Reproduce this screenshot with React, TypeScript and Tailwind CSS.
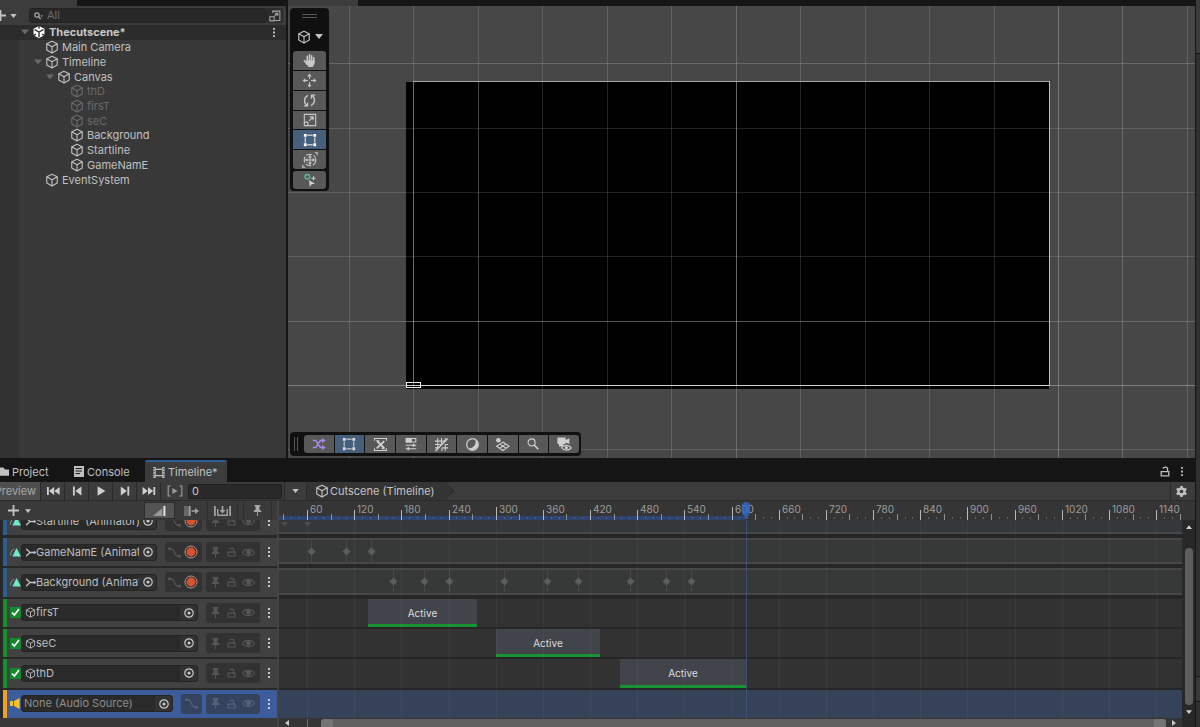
import React from "react";

type P = { className?: string };

const Svg = ({ className = "", vb = "0 0 16 16", children }: P & { vb?: string; children: React.ReactNode }) => (
  <svg viewBox={vb} className={"shrink-0 " + className} fill="none" stroke="currentColor" aria-hidden="true">
    {children}
  </svg>
);

const Cube = ({ className = "size-[14px]" }: P) => (
  <Svg className={className}>
    <path d="M8 1.4 14 4.4V11.4L8 14.8 2 11.4V4.4Z M2 4.4 8 7.6 14 4.4 M8 7.6V14.8" strokeWidth="1.3" strokeLinejoin="round" />
  </Svg>
);
const UnityLogo = ({ className = "size-[14px]" }: P) => (
  <Svg className={className}>
    <path d="M8 1 14.2 4.4V11.6L8 15 1.8 11.6V4.4Z" fill="currentColor" stroke="none" />
    <path d="M8 8V14M8 8 3 5.2M8 8 13 5.2" stroke="#2c2c2c" strokeWidth="1.6" />
    <path d="M8 0V4M1 12.4 4.4 10.4M15 12.4 11.6 10.4" stroke="#2c2c2c" strokeWidth="1.6" />
  </Svg>
);
const Caret = ({ className = "w-[8px] h-[5px]" }: P) => (
  <Svg className={className} vb="0 0 8 5"><path d="M0 0H8L4 5Z" fill="currentColor" stroke="none" /></Svg>
);
const Dots = ({ className = "w-[4px] h-[12px]" }: P) => (
  <Svg className={className} vb="0 0 4 12">
    <path d="M1 1H3V3H1ZM1 5H3V7H1ZM1 9H3V11H1Z" fill="currentColor" stroke="none" />
  </Svg>
);
const Plus = ({ className = "size-[11px]" }: P) => (
  <Svg className={className} vb="0 0 11 11"><path d="M5.5 0V11M0 5.5H11" strokeWidth="1.8" /></Svg>
);
const Lock = ({ className = "w-[10px] h-[11px]" }: P) => (
  <Svg className={className} vb="0 0 10 11">
    <path d="M1.2 5.6H8.8V9.9H1.2ZM3 2.6C3.4 .8 7.6 .4 7.6 3.2V5.6" strokeWidth="1.3" />
  </Svg>
);
const Pin = ({ className = "w-[9px] h-[12px]" }: P) => (
  <Svg className={className} vb="0 0 9 12">
    <path d="M1.4 0H7.6V1.6H6.6V5L8.6 6.2V7.6H.4V6.2L2.4 5V1.6H1.4ZM4 7.6H5V12H4Z" fill="currentColor" stroke="none" />
  </Svg>
);
const Eye = ({ className = "w-[13px] h-[9px]" }: P) => (
  <Svg className={className} vb="0 0 13 9">
    <path d="M.6 4.5C3 .3 10 .3 12.4 4.5 10 8.7 3 8.7 .6 4.5Z" strokeWidth="1.1" />
    <circle cx="6.5" cy="4.3" r="2.5" fill="currentColor" stroke="none" />
  </Svg>
);
const Picker = ({ className = "size-[10px]" }: P) => (
  <Svg className={className} vb="0 0 10 10">
    <circle cx="5" cy="5" r="4.2" strokeWidth="1.2" />
    <circle cx="5" cy="5" r="1.6" fill="currentColor" stroke="none" />
  </Svg>
);
const Curve = ({ className = "w-[14px] h-[12px]" }: P) => (
  <Svg className={className} vb="0 0 14 12">
    <path d="M2.5 2C9 2 5 10 11.5 10" strokeWidth="1.2" />
    <path d="M0 .6H3V3.4H0ZM11 8.6H14V11.4H11Z" fill="currentColor" stroke="none" />
  </Svg>
);
const RectTool = ({ className = "size-[14px]" }: P) => (
  <Svg className={className}>
    <path d="M5 2.5H11M5 13.5H11M2.5 5V11M13.5 5V11" strokeWidth="1.1" />
    <path d="M1 1H4.2V4.2H1ZM11.8 1H15V4.2H11.8ZM1 11.8H4.2V15H1ZM11.8 11.8H15V15H11.8Z" fill="currentColor" stroke="none" />
  </Svg>
);

/* ---------- Hierarchy ---------- */

type Node = { name: string; level: number; open?: boolean; kind?: "scene"; off?: boolean };
const nodes: Node[] = [
  { name: "Thecutscene*", level: 0, open: true, kind: "scene" },
  { name: "Main Camera", level: 1 },
  { name: "Timeline", level: 1, open: true },
  { name: "Canvas", level: 2, open: true },
  { name: "thD", level: 3, off: true },
  { name: "firsT", level: 3, off: true },
  { name: "seC", level: 3, off: true },
  { name: "Background", level: 3 },
  { name: "Startline", level: 3 },
  { name: "GameNamE", level: 3 },
  { name: "EventSystem", level: 1 },
];
const indent = ["pl-[21px]", "pl-[34px]", "pl-[46px]", "pl-[59px]"];

function Hierarchy() {
  return (
    <section className="flex w-[286px] shrink-0 flex-col bg-[#383838]">
      <div className="flex h-[6px] items-end overflow-hidden bg-[#151515]">
        <button className="flex h-[22px] w-[77px] shrink-0 items-center bg-[#3c3c3c] pb-[6px] pl-[10px] text-[11px] leading-[16px]">Hierarchy</button>
      </div>
      <div className="flex h-[19px] items-center bg-[#3c3c3c] pr-[3px]">
        <button aria-label="Create" className="flex w-[29px] items-center gap-[4px] overflow-hidden text-[#c4c4c4]">
          <Plus className="-ml-[5px] size-[11px]" />
          <Caret className="w-[7px] h-[4px]" />
        </button>
        <label className="flex h-[15px] flex-1 items-center gap-[4px] rounded-[3px] border border-[#232323] bg-[#282828] pl-[4px]">
          <Svg className="h-[8px] w-[9px] text-[#b0b0b0]" vb="0 0 9 8">
            <circle cx="3" cy="3" r="2.2" strokeWidth="1.2" />
            <path d="M4.6 4.6 6.6 7" strokeWidth="1.4" />
            <path d="M6.4 3.4H9L7.7 5Z" fill="currentColor" stroke="none" />
          </Svg>
          <input aria-label="Search" placeholder="All" className="w-full min-w-0 bg-transparent text-[11px] leading-[13px] text-[#c4c4c4] outline-none placeholder:text-[#6e6e6e]" />
        </label>
        <button aria-label="Open search window" className="flex h-[15px] w-[16px] items-center justify-center rounded-r-[3px] bg-[#2c2c2c] text-[#a8a8a8]">
          <Svg className="size-[12px]">
            <path d="M5 4V1.5H14.5V14H8M7.5 8 11.5 4.3M8 4.2H11.6V8" strokeWidth="1.4" />
            <path d="M1.2 9H7V14.5H1.2Z" strokeWidth="1.4" />
          </Svg>
        </button>
      </div>
      <ul role="tree" className="grid h-[162px] grid-rows-[repeat(11,1fr)] bg-[linear-gradient(90deg,#323232_19px,#383838_19px)]">
        {nodes.map((n) => (
          <li key={n.name} role="treeitem" className={"flex items-center text-[11px] leading-[14px] " + indent[n.level] + (n.kind ? " bg-[#2c2c2c] font-bold text-[#c8c8c8]" : n.off ? " text-[#6a6a6a]" : " text-[#c0c0c0]")}>
            <span className="flex w-[11px] text-[#686868]">{n.open && <Caret className="h-[6px] w-[8px]" />}</span>
            {n.kind ? <UnityLogo className="size-[14px] text-white" /> : <Cube />}
            <span className="ml-[3px]">{n.name}</span>
            {n.kind && (
              <button aria-label="Scene menu" className="ml-auto mr-[10px]"><Dots className="h-[11px] w-[4px]" /></button>
            )}
          </li>
        ))}
      </ul>
      <div className="flex-1 bg-[linear-gradient(90deg,#323232_19px,#383838_19px)]" />
    </section>
  );
}

/* ---------- Scene view ---------- */

const vLines = [61, 125, 190, 254, 319, 383, 448, 512, 577, 641, 706, 770, 834, 899];
const hLines = [57, 122, 186, 250, 315, 379, 443];

function SceneCanvas() {
  return (
    <svg className="absolute inset-0 h-full w-full" shapeRendering="crispEdges" aria-label="Scene view">
      <rect x="118" y="76" width="643" height="307" fill="#000" />
      {vLines.map((x, i) => (
        <rect key={x} x={x} y="0" width="1" height="100%" fill="#fff" opacity={i === 11 ? 0.26 : i === 12 || i === 6 ? 0.2 : 0.14} />
      ))}
      {hLines.map((y, i) => (
        <rect key={y} x="0" y={y} width="100%" height="1" fill="#fff" opacity={i === 5 ? 0.3 : i === 4 || i === 0 ? 0.18 : 0.13} />
      ))}
      <rect x="118" y="315" width="643" height="1" fill="#fff" opacity="0.2" />
      <rect x="448" y="76" width="1" height="303" fill="#fff" opacity="0.25" />
      <rect x="190" y="76" width="1" height="303" fill="#fff" opacity="0.16" />
      <rect x="125" y="76" width="1" height="303" fill="#8c8c8c" opacity="0.7" />
      <rect x="125" y="75" width="637" height="1" fill="#a8a8a8" />
      <rect x="761" y="75" width="1" height="305" fill="#c0c0c0" />
      <rect x="118" y="379" width="644" height="1" fill="#d0d0d0" />
      <rect x="118.5" y="376.5" width="14" height="5" fill="none" stroke="#f0f0f0" />
    </svg>
  );
}

const tools: { label: string; icon: React.ReactNode; on?: boolean }[] = [
  { label: "View", icon: (
    <Svg className="size-[15px]">
      <path d="M5.6 9V3.6M8 8V2M10.3 8.4V3M12.6 9.6V5.2M2.4 8 5.6 12" strokeWidth="1.7" strokeLinecap="round" />
      <path d="M4.8 8H13.4V11.4L11.4 15H7L4 10.6Z" fill="currentColor" stroke="none" />
    </Svg>) },
  { label: "Move", icon: (
    <Svg className="size-[15px]">
      <path d="M8 .6 10.4 3.6H5.6ZM8 15.4 10.4 12.4H5.6ZM.6 8 3.6 5.6V10.4ZM15.4 8 12.4 5.6V10.4Z" fill="currentColor" stroke="none" />
      <path d="M8 3V6.4M8 9.6V13M3 8H6.4M9.6 8H13" strokeWidth="1.1" />
    </Svg>) },
  { label: "Rotate", icon: (
    <Svg className="size-[15px]">
      <path d="M5.6 13.4C1.6 11 1.6 5 6.4 2.6M10.4 2.6C14.4 5 14.4 11 9.6 13.4" strokeWidth="1.4" />
      <path d="M2 13.8H6V10M14 2.2H10V6" strokeWidth="1.3" />
    </Svg>) },
  { label: "Scale", icon: (
    <Svg className="size-[14px]">
      <path d="M1.5 1.5H14.5V14.5H1.5ZM1.5 10.5H5.5V14.5M7 9 11.4 4.6M7.6 4.4H11.6V8.4" strokeWidth="1.3" />
    </Svg>) },
  { label: "Rect", icon: <RectTool />, on: true },
  { label: "Transform", icon: (
    <Svg className="size-[16px]">
      <circle cx="8" cy="8" r="5.8" strokeWidth="1.1" strokeDasharray="6 1.6" />
      <path d="M8 2.8 10 5.4H6ZM8 13.2 10 10.6H6ZM2.8 8 5.4 6V10ZM13.2 8 10.6 6V10Z" fill="currentColor" stroke="none" />
      <path d="M8 5V11M5 8H11M12.8 .8H15.2V3.2M3.2 15.2H.8V12.8" strokeWidth="1.1" />
    </Svg>) },
];

const views: { label: string; icon: React.ReactNode; on?: boolean }[] = [
  { label: "Shuffle", icon: (
    <Svg className="size-[14px] text-[#a78be0]">
      <path d="M1 4H4.4L9.6 12H13M1 12H4.4L9.6 4H13" strokeWidth="1.7" />
      <path d="M11.4 1 15.6 4 11.4 7ZM11.4 9 15.6 12 11.4 15Z" fill="currentColor" stroke="none" />
    </Svg>) },
  { label: "Rect handles", icon: <RectTool />, on: true },
  { label: "Tools", icon: (
    <Svg className="size-[15px]">
      <path d="M1.6 4V1.6H14.4V4M1.6 12V14.4H14.4V12" strokeWidth="1.2" />
      <path d="M4 12.2 12 4.4M4.4 4.4 12 12" strokeWidth="2" />
      <path d="M3 3.4H7L6 7ZM10 9.6 13 13H9Z" fill="currentColor" stroke="none" />
    </Svg>) },
  { label: "Draw mode", icon: (
    <Svg className="size-[14px]">
      <path d="M2.5 1.6H13.5V5.8H2.5Z" strokeWidth="1.2" />
      <path d="M2.5 1.6H8.4V5.8H2.5Z" fill="currentColor" />
      <path d="M2 9.4H14M2 13.4H14" strokeWidth="1.2" />
      <path d="M10 7.6H12V11H10ZM4 11.8H6V15.2H4Z" fill="currentColor" stroke="none" />
    </Svg>) },
  { label: "Grid", icon: (
    <Svg className="size-[15px]">
      <path d="M1 4.4H12M1 8H8M1 11.6H5M4 1V12M8 1V8M12 1V5M12 8V15M15 11.6H8.6M15 8H11.6M8.4 12V15" strokeWidth="1.1" />
      <path d="M1.6 15 14.6 1.6" strokeWidth="1.5" />
    </Svg>) },
  { label: "Lighting", icon: (
    <Svg className="size-[15px]">
      <circle cx="8" cy="8" r="6.2" strokeWidth="1.3" />
      <path d="M11 3C12.4 8 9.4 12 3.6 12.4 8 16 14.6 12.4 14 7 13.8 5 12.4 3.6 11 3Z" fill="currentColor" stroke="none" />
    </Svg>) },
  { label: "Layers", icon: (
    <Svg className="size-[15px]">
      <circle cx="3.6" cy="3.4" r="2.4" fill="currentColor" stroke="none" />
      <path d="M8.4 5.4 15 9.8 8.4 14.4 1.8 9.8ZM5.2 7.6 11.8 12M11.6 7.6 5 12" strokeWidth="1.2" />
    </Svg>) },
  { label: "Search", icon: (
    <Svg className="size-[14px]">
      <circle cx="6.4" cy="6.2" r="4" strokeWidth="1.3" />
      <path d="M9.4 9.2 14 14" strokeWidth="1.8" />
    </Svg>) },
  { label: "Camera", icon: (
    <Svg className="size-[16px]">
      <path d="M1.4 1.6H9.6V4L13.4 2.2V8L9.6 6.6V8H1.4ZM3 8H7.4V10.4H3Z" fill="currentColor" stroke="none" />
      <path d="M5.6 11.8C7.6 8.6 13 8.6 15.2 11.8 13 15 7.6 15 5.6 11.8Z" strokeWidth="1.2" fill="#585858" />
      <circle cx="10.4" cy="11.8" r="1.5" fill="currentColor" stroke="none" />
    </Svg>) },
];

const toolBtn = "flex min-h-0 items-center justify-center ";

function SceneView() {
  return (
    <section className="flex min-w-0 flex-1 flex-col">
      <div className="flex h-[6px] bg-[#151515]"><div className="w-[70px] bg-[#3c3c3c]" /></div>
      <div className="relative flex flex-1 flex-col items-start justify-between overflow-hidden bg-[#474747] p-[2px]">
        <SceneCanvas />
        <div role="toolbar" aria-label="Tools" className="relative flex w-[39px] flex-col rounded-[4px] bg-[#101010] px-[3px] pb-[2px] text-[#c4c4c4]">
          <div className="mx-auto mt-[6px] h-[4px] w-[15px] border-y border-[#555]" />
          <button aria-label="Pivot mode" className="flex h-[33px] items-center justify-center gap-[4px] pt-[4px]">
            <Cube className="size-[14px]" />
            <Caret className="h-[5px] w-[8px]" />
          </button>
          <div className="grid h-[118px] grid-rows-6 gap-px overflow-hidden rounded-[3px]">
            {tools.map((t) => (
              <button key={t.label} aria-label={t.label} className={toolBtn + (t.on ? "bg-[#46607c] text-white" : "bg-[#585858] text-[#c8c8c8]")}>{t.icon}</button>
            ))}
          </div>
          <button aria-label="Custom tools" className="mt-[2px] flex h-[18px] items-center justify-center rounded-[3px] bg-[#585858] text-[#d0d0d0]">
            <Svg className="size-[14px]">
              <circle cx="5" cy="4.4" r="2.7" stroke="#58c08c" strokeWidth="1.5" />
              <path d="M12 3.6V8.4M9.6 6H14.4" strokeWidth="1.2" />
              <path d="M7 8 13.6 12.4 9.8 12.8 7.6 16Z" fill="currentColor" stroke="none" />
            </Svg>
          </button>
        </div>
        <div role="toolbar" aria-label="View options" className="relative flex h-[24px] items-center rounded-[4px] bg-[#101010] pr-[2px]">
          <div className="ml-[4px] mr-[6px] h-[14px] w-[4px] border-x border-[#555]" />
          <div className="grid h-[18px] w-[275px] grid-cols-9 gap-px overflow-hidden rounded-[3px]">
            {views.map((t) => (
              <button key={t.label} aria-label={t.label} className={toolBtn + (t.on ? "bg-[#46607c] text-[#dcdcdc]" : "bg-[#585858] text-[#cfcfcf]")}>{t.icon}</button>
            ))}
          </div>
        </div>
      </div>
    </section>
  );
}

/* ---------- Timeline ---------- */

const transport: { label: string; d: string }[] = [
  { label: "First frame", d: "M1 2H2.8V10H1ZM8.2 2V10L3 6ZM13.6 2V10L8.4 6Z" },
  { label: "Previous frame", d: "M3 1.6H4.8V10.4H3ZM11.4 1.6V10.4L5.4 6Z" },
  { label: "Play", d: "M3.6 1.2V10.8L11.4 6Z" },
  { label: "Next frame", d: "M9.4 1.6H11.2V10.4H9.4ZM2.8 1.6V10.4L8.8 6Z" },
  { label: "Last frame", d: "M11.4 2H13.2V10H11.4ZM6 2V10L11.2 6ZM.6 2V10L5.8 6Z" },
];

const seg = "flex h-full items-center justify-center border-l border-[#2a2a2a] ";

function TabBar() {
  return (
    <div className="flex h-[23px] items-end bg-[#151515] text-[11px] leading-[16px] text-[#c0c0c0]">
      <button className="flex h-[22px] w-[74px] items-center gap-[3px] pt-px">
        <Svg className="h-[9px] w-[9px]" vb="0 0 9 9"><path d="M0 .6H3.4L5 2.4H9V8.8H0Z" fill="currentColor" stroke="none" /></Svg>
        Project
      </button>
      <button className="flex h-[22px] w-[71px] items-center gap-[3px] pt-px">
        <Svg className="h-[11px] w-[10px]" vb="0 0 10 11">
          <path d="M0 0H10V11H0Z" fill="currentColor" stroke="none" />
          <path d="M1.5 2.5H8M1.5 5H8M1.5 7.6H6" stroke="#151515" strokeWidth="1" />
        </Svg>
        Console
      </button>
      <button className="flex h-[22px] w-[82px] items-center gap-[3px] rounded-t-[2px] border-t-2 border-[#2f5f90] bg-[#3c3c3c] pl-[8px]">
        <Svg className="h-[11px] w-[12px]" vb="0 0 12 11">
          <path d="M1.6 0V11M10.4 0V11" strokeWidth="2.4" />
          <path d="M1.2 1V10M10.8 1V10" stroke="#3c3c3c" strokeWidth="1" strokeDasharray="1.4 1.4" />
          <path d="M3 2.4H9M3 8.6H9" strokeWidth="1.1" />
        </Svg>
        Timeline*
      </button>
      <div className="ml-auto flex h-[22px] items-center gap-[10px] pr-[11px]">
        <button aria-label="Lock"><Lock /></button>
        <button aria-label="Panel menu"><Dots className="h-[11px] w-[4px]" /></button>
      </div>
    </div>
  );
}

function TransportBar() {
  return (
    <div className="flex h-[19px] items-center border-b border-[#2a2a2a] bg-[#3c3c3c] text-[11px] leading-[16px] text-[#c4c4c4]">
      <button className="flex h-full w-[40px] items-center justify-end overflow-hidden bg-[#4e4e4e] pr-[4px] text-[#a8a8a8]">Preview</button>
      {transport.map((t) => (
        <button key={t.label} aria-label={t.label} className={seg + "w-[24px]"}>
          <Svg className="h-[12px] w-[14px] text-[#d0d0d0]" vb="0 0 14 12"><path d={t.d} fill="currentColor" stroke="none" /></Svg>
        </button>
      ))}
      <button aria-label="Play range" className={seg + "w-[28px] text-[#9a9a9a]"}>
        <Svg className="h-[12px] w-[16px]" vb="0 0 16 12">
          <path d="M3.6 1H1.2V11H3.6M12.4 1H14.8V11H12.4" strokeWidth="1.2" />
          <path d="M5.4 3V9L10.6 6Z" fill="currentColor" stroke="none" />
        </Svg>
      </button>
      <input aria-label="Current frame" defaultValue="0" className="h-[15px] w-[94px] rounded-[2px] border border-[#202020] bg-[#292929] pl-[3px] text-[11px] text-[#c8c8c8] outline-none" />
      <button aria-label="Select timeline" className={seg + "ml-[2px] w-[22px]"}><Caret className="h-[4px] w-[7px]" /></button>
      <nav className="flex h-full items-center border-l border-[#2a2a2a] bg-[#343434] pl-[8px]">
        <a href="#cutscene" className="flex items-center gap-[1px]"><Cube />Cutscene (Timeline)</a>
        <svg className="ml-[10px] h-[18px] w-[9px] bg-[#3c3c3c]" viewBox="0 0 9 18" aria-hidden="true">
          <path d="M0 0 9 9 0 18Z" fill="#343434" />
          <path d="M0 0 9 9 0 18" fill="none" stroke="#2a2a2a" />
        </svg>
      </nav>
      <button aria-label="Timeline settings" className={seg + "ml-auto mr-[3px] w-[22px]"}>
        <Svg className="size-[11px]" vb="0 0 12 12">
          <path d="M6 0V12M.8 3 11.2 9M.8 9 11.2 3" strokeWidth="2.6" />
          <circle cx="6" cy="6" r="3.4" strokeWidth="2.4" />
          <circle cx="6" cy="6" r="2" fill="#3c3c3c" stroke="none" />
        </Svg>
      </button>
    </div>
  );
}

const frameX = (f: number) => Math.floor(28.5 + (f - 60) * 0.7862);
const ticks = Array.from({ length: 115 }, (_, i) => 30 + i * 10).filter((f) => f <= 1170);

function Ruler() {
  return (
    <svg className="h-[19px] w-full flex-1 bg-[#353535]" shapeRendering="crispEdges" aria-label="Frames">
      <rect x="0" y="15" width="467" height="4" fill="#2f4470" />
      {ticks.map((f) => {
        const big = f % 300 === 0;
        const major = f % 60 === 0;
        const mid = f % 30 === 0;
        const h = big ? 13 : major ? 10 : mid ? 6 : 2;
        return (
          <rect key={f} x={frameX(f)} y={19 - h - (mid ? 0 : 1)} width="1" height={h} fill={major ? "#b8b8b8" : mid ? "#8e8e8e" : "#5c6270"} />
        );
      })}
      {ticks.filter((f) => f % 60 === 0).map((f) => (
        <text key={f} x={frameX(f) + 3} y="12" fontSize="10" fill="#9c9c9c">{f}</text>
      ))}
      <path d="M463 3Q467 -1 471 3V12L467 18 463 12Z" fill="#2f6ad0" opacity="0.8" shapeRendering="auto" />
    </svg>
  );
}

const mini = "flex h-[17px] items-center justify-center ";

function HeaderTools() {
  return (
    <div className="flex h-[19px] w-[277px] shrink-0 items-center bg-[#3a3a3a] pl-[8px] text-[#c4c4c4]">
      <button aria-label="Add track" className="flex items-center gap-[6px] pr-[5px]">
        <Plus />
        <Caret className="h-[4px] w-[6px]" />
      </button>
      <div className="ml-auto flex items-center pr-[5px]">
        <button aria-label="Mix mode" className={mini + "w-[31px] border border-[#2c2c2c] bg-[#545454]"}>
          <Svg className="h-[10px] w-[13px]" vb="0 0 13 10">
            <path d="M0 10 9.4 2V10Z" fill="#989898" stroke="none" />
            <path d="M10.4 0H12.4V10H10.4Z" fill="#e4e4e4" stroke="none" />
          </Svg>
        </button>
        <button aria-label="Ripple mode" className={mini + "w-[32px] text-[#a0a0a0]"}>
          <Svg className="h-[10px] w-[15px]" vb="0 0 15 10">
            <path d="M0 0H4.4V10H0Z" fill="#666" stroke="none" />
            <path d="M5.6 0V10" strokeWidth="2" />
            <path d="M7.6 5H12" strokeWidth="1.5" />
            <path d="M11 2 15 5 11 8Z" fill="currentColor" stroke="none" />
          </Svg>
        </button>
        <button aria-label="Replace mode" className={mini + "w-[31px] border-x border-[#2c2c2c] text-[#a0a0a0]"}>
          <Svg className="h-[10px] w-[17px]" vb="0 0 17 10">
            <path d="M.9 0V10M16.1 0V10M8.5 0V5.4" strokeWidth="1.8" />
            <path d="M5.4 4H11.6L8.5 7.4ZM3 8.4H14V10H3ZM3 3H4.4V10H3ZM12.6 3H14V10H12.6Z" fill="currentColor" stroke="none" />
          </Svg>
        </button>
        <button aria-label="Markers" className={mini + "ml-[5px] w-[29px] border-x border-[#2c2c2c] text-[#a8a8a8]"}><Pin className="h-[11px] w-[9px]" /></button>
      </div>
    </div>
  );
}

type Track = { name: string; kind: "anim" | "active" | "audio"; keys?: number[]; clip?: { left: number; width: number } };
const first: Track = { name: "Startline  (Animator)", kind: "anim" };
const tracks: Track[] = [
  { name: "GameNamE (Animator)", kind: "anim", keys: [32, 67, 92] },
  { name: "Background (Animator)", kind: "anim", keys: [114, 145, 170, 225, 268, 299, 351, 387, 412] },
  { name: "firsT", kind: "active", clip: { left: 89, width: 109 } },
  { name: "seC", kind: "active", clip: { left: 217, width: 104 } },
  { name: "thD", kind: "active", clip: { left: 341, width: 126 } },
  { name: "None (Audio Source)", kind: "audio" },
];

const box = "flex h-[20px] items-center rounded-[3px] ";

function TrackHeader({ t }: { t: Track }) {
  const audio = t.kind === "audio";
  const strip = t.kind === "anim" ? "border-[#2b5f8e]" : t.kind === "active" ? "border-[#15902a]" : "border-[#f0a020]";
  const group = audio ? "bg-[#35435e] text-[#56617a]" : "bg-[#323232] text-[#565656]";
  return (
    <div className={"ml-[3px] flex min-h-0 min-w-0 items-center border-l-[4px] pl-[2px] pr-[6px] " + strip + (audio ? " bg-[#3d5c9c]" : " bg-[#414141]")}>
      <span className="flex w-[12px] items-center justify-center">
        {t.kind === "anim" && (
          <Svg className="h-[9px] w-[11px]" vb="0 0 11 9">
            <path d="M6.5 0 11 8.4H2.4Z" fill="#6fe8cc" stroke="none" />
            <path d="M.6 7.4C.6 4 2 2 4.2 1" stroke="#8a9a96" />
          </Svg>
        )}
        {t.kind === "active" && (
          <label className="relative flex size-[11px]">
            <input type="checkbox" defaultChecked aria-label={t.name + " active"} className="size-[11px] appearance-none bg-[#128a2b]" />
            <Svg className="pointer-events-none absolute inset-0 size-[11px] text-white" vb="0 0 11 11"><path d="M2 5.6 4.4 8 9 2" strokeWidth="1.7" /></Svg>
          </label>
        )}
        {audio && (
          <Svg className="h-[11px] w-[10px]" vb="0 0 10 11">
            <path d="M0 3H3V8H0ZM4 3 9.6 0V11L4 8Z" fill="#f6c12a" stroke="none" />
          </Svg>
        )}
      </span>
      <div className="flex h-[17px] min-w-0 flex-1 items-center rounded-[3px] border border-[#242424] bg-[#2a2a2a] text-[#bebebe]">
        {t.kind === "anim" && (
          <Svg className="ml-[4px] h-[9px] w-[10px]" vb="0 0 10 9">
            <path d="M0 .8 4 4.5 0 8.2M4 4.5H9" strokeWidth="1.3" />
            <circle cx="8.6" cy="4.5" r="1.3" fill="currentColor" stroke="none" />
          </Svg>
        )}
        {t.kind === "active" && <Cube className="ml-[3px] size-[11px]" />}
        <input readOnly aria-label="Binding" value={t.name} className={"min-w-0 flex-1 bg-transparent text-[11px] leading-[15px] outline-none " + (audio ? "pl-[2px] text-[#8e8e8e]" : "")} />
        <button aria-label="Pick object" className="flex h-full w-[17px] items-center justify-center rounded-r-[3px] bg-[#323232] text-[#c8c8c8]"><Picker /></button>
      </div>
      {t.kind === "anim" && (
        <div className={box + "ml-[8px] w-[37px] justify-between pl-[3px] pr-[4px] " + group}>
          <button aria-label="Curves"><Curve className="h-[11px] w-[13px]" /></button>
          <button aria-label="Record">
            <Svg className="size-[14px]" vb="0 0 14 14">
              <circle cx="7" cy="7" r="6" stroke="#b8948a" strokeWidth="1" />
              <circle cx="7" cy="7" r="4.4" fill="#d8532f" stroke="none" />
            </Svg>
          </button>
        </div>
      )}
      {audio && (
        <div className={box + "ml-[8px] w-[21px] justify-center " + group}>
          <button aria-label="Curves"><Curve className="h-[11px] w-[13px]" /></button>
        </div>
      )}
      <div className={box + (t.kind === "active" ? "ml-[8px] " : "ml-[4px] ") + "w-[54px] justify-between px-[5px] " + group}>
        <button aria-label="Pin"><Pin className="h-[11px] w-[9px]" /></button>
        <button aria-label="Lock track"><Lock className="h-[10px] w-[9px]" /></button>
        <button aria-label="Mute track"><Eye /></button>
      </div>
      <button aria-label="Track menu" className="ml-[7px] text-[#c8c8c8]"><Dots className="h-[12px] w-[4px]" /></button>
    </div>
  );
}

function Lane({ t }: { t: Track }) {
  if (t.kind === "anim")
    return (
      <div className="relative min-h-0 pb-[2px]">
        <div className="h-full border-y-2 border-[#474747] bg-[#373938]" />
        {t.keys?.map((k) => (
          <svg key={k} style={{ left: k - 4 }} className="absolute top-[2px] h-[22px] w-[9px]" viewBox="0 0 9 22" aria-hidden="true">
            <path d="M4.5 0V22" stroke="#484848" />
            <path d="M4.5 7.5 8.5 11.5 4.5 15.5 .5 11.5Z" fill="#5c5c5c" />
          </svg>
        ))}
      </div>
    );
  return (
    <div className={"relative min-h-0 " + (t.kind === "audio" ? "bg-[#364257]" : "bg-[#323232]")}>
      {t.clip && (
        <div style={{ left: t.clip.left, width: t.clip.width }} className="absolute inset-y-0 flex items-center justify-center border-b-[3px] border-[#179431] bg-[#42444c] pt-[3px] text-[10px] leading-[14px] text-[#dcdcdc]">
          Active
        </div>
      )}
    </div>
  );
}

function Tracks() {
  return (
    <div className="flex min-h-0">
      <div className="w-[277px] shrink-0 bg-[#383838]">
        <div className="bg-[#282828]">
          <div className="grid h-[15px] grid-cols-1 content-end overflow-hidden"><div className="grid h-[28px] grid-cols-1"><TrackHeader t={first} /></div></div>
          <div className="mt-[3px] grid h-[180px] grid-cols-1 grid-rows-6 gap-[2px]">
            {tracks.map((t) => <TrackHeader key={t.name} t={t} />)}
          </div>
        </div>
      </div>
      <div className="w-[2px] bg-[#444]" />
      <div className="relative min-w-0 flex-1 overflow-hidden">
        <div className="bg-[#262626]">
          <div className="h-[14px] border-b-2 border-[#474747] bg-[#35383a]" />
          <div className="mt-[4px] grid h-[180px] grid-rows-6 gap-[2px]">
            {tracks.map((t) => <Lane key={t.name} t={t} />)}
          </div>
        </div>
        <svg className="pointer-events-none absolute inset-0 h-full w-full" shapeRendering="crispEdges" aria-hidden="true">
          {ticks.filter((f) => f % 60 === 0).map((f) => (
            <rect key={f} x={frameX(f)} y="0" width="1" height="198" fill="#fff" opacity="0.04" />
          ))}
          <path d="M2 2H9L5.5 7ZM25 2H32L28.5 7Z" fill="#4c4c4c" shapeRendering="auto" />
          <rect x="467" y="0" width="1" height="198" fill="#3e5680" opacity="0.8" />
        </svg>
        <div className="flex h-[9px] items-center bg-[#353535] pl-[6px] pt-[1px] text-[#c8c8c8]">
          <button aria-label="Scroll left"><Svg className="h-[6px] w-[4px]" vb="0 0 4 6"><path d="M4 0V6L0 3Z" fill="currentColor" stroke="none" /></Svg></button>
          <div className="ml-[18px] h-[8px] w-px bg-[#707070]" />
          <div className="ml-[13px] mr-[6px] h-[8px] flex-1 rounded-t-[3px] border-x-[12px] border-[#747474] bg-[#606060]" />
          <button aria-label="Scroll right" className="mr-[6px]"><Svg className="h-[6px] w-[4px]" vb="0 0 4 6"><path d="M0 0V6L4 3Z" fill="currentColor" stroke="none" /></Svg></button>
        </div>
      </div>
      <div className="flex w-[13px] flex-col items-center bg-[#282828] pb-[13px] pt-[5px] text-[#d0d0d0]">
        <button aria-label="Scroll up"><Caret className="h-[4px] w-[6px] rotate-180" /></button>
        <div className="mb-[5px] mt-[19px] w-[8px] flex-1 rounded-[4px] bg-[#5e5e5e]" />
        <button aria-label="Scroll down"><Caret className="h-[4px] w-[6px]" /></button>
      </div>
    </div>
  );
}

export default function App() {
  return (
    <div className="flex h-screen overflow-hidden bg-[#151515] font-['Inter',sans-serif] text-[#c4c4c4]">
      <div className="flex min-w-0 flex-1 flex-col">
        <div className="flex min-h-0 flex-1 gap-[2px]">
          <Hierarchy />
          <SceneView />
        </div>
        <section className="mt-px shrink-0">
          <TabBar />
          <TransportBar />
          <div className="flex bg-[#353535]">
            <HeaderTools />
            <div className="w-[2px] bg-[#444]" />
            <Ruler />
            <div className="w-[13px] shrink-0 bg-[#353535]" />
          </div>
          <Tracks />
        </section>
      </div>
      <aside className="ml-px flex w-[4px] flex-col">
        <div className="h-[53px] bg-[#3c3c3c]" />
        <div className="mt-px flex-1 bg-[#303030]" />
        <div className="mt-px h-[24px] bg-[#383838]" />
        <div className="mt-px h-[25px] bg-[#303030]" />
      </aside>
    </div>
  );
}
